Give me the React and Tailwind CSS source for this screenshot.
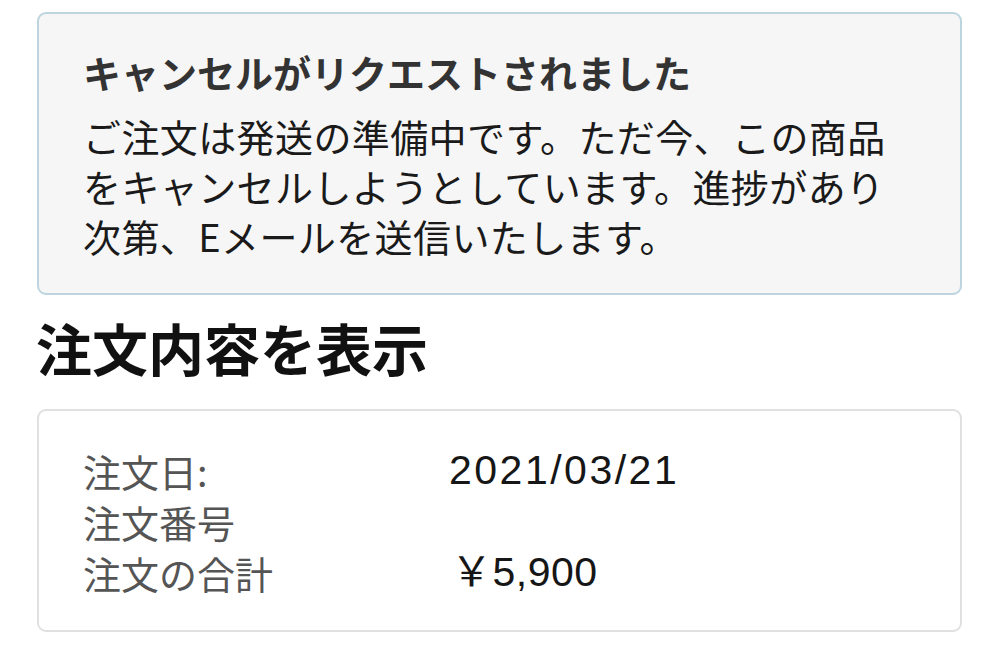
export default function App() {
  const font = { fontFamily: '"Noto Sans CJK JP", "Noto Sans", sans-serif' };
  const latin = { fontFamily: '"Liberation Sans", "Noto Sans CJK JP", sans-serif' };
  return (
    <div className="w-[999px] h-[656px] bg-white overflow-hidden" style={font}>
      <div className="px-[37px] pt-[12px]">
        <div className="rounded-[9px] border-2 border-[#bcd5df] bg-[#f6f6f6] pl-[44px] pr-[20px] pt-[33px] pb-[32px]">
          <div className="text-[38px] leading-[50px] font-bold text-[#333] mb-[14px]">
            キャンセルがリクエストされました
          </div>
          <div className="text-[38px] leading-[50px] tracking-[0.4px] text-[#1a1a1a]">
            <div>ご注文は発送の準備中です。ただ今、この商品</div>
            <div>をキャンセルしようとしています。進捗があり</div>
            <div>次第、Eメールを送信いたします。</div>
          </div>
        </div>
        <h1 className="text-[56px] leading-[70px] font-bold text-[#111] mt-[17px] mb-[27px] -ml-[1px]">
          注文内容を表示
        </h1>
        <div className="rounded-[9px] border-2 border-[#e0e0e0] bg-white pl-[44px] pt-[34px] pb-[32px]">
          <div className="grid grid-cols-[366px_1fr] text-[38px] leading-[51px]">
            <div className="text-[#555]">注文日:</div>
            <div className="text-[#161616] text-[41px] tracking-[2.5px]" style={latin}>2021/03/21</div>
            <div className="text-[#555]">注文番号</div>
            <div></div>
            <div className="text-[#555]">注文の合計</div>
            <div className="text-[#161616] text-[41px] tracking-[0.5px] pl-[2px]" style={latin}>￥5,900</div>
          </div>
        </div>
      </div>
    </div>
  );
}
